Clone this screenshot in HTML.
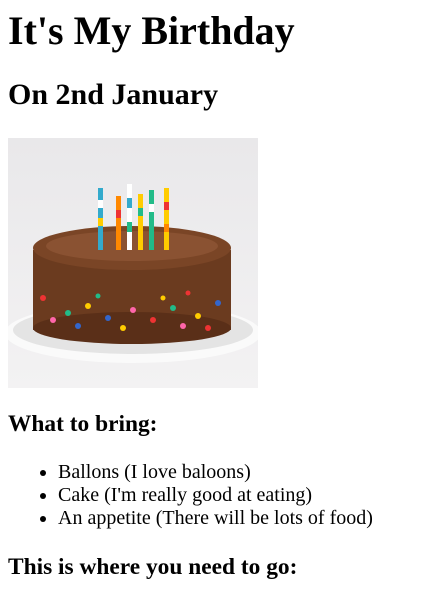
<!DOCTYPE html>
<html><head><meta charset="utf-8"><style>
html,body{margin:0;padding:0;background:#fff;}
body{padding:8px;font-family:"Liberation Serif",serif;color:#000;width:408px;height:575px;overflow:hidden}
h1{font-size:40px;margin:0 0 24px;line-height:46px;font-weight:bold}
h2{font-size:30px;margin:0 0 26px;line-height:34px;font-weight:bold}
h3{font-size:23.4px;margin:0;line-height:27px;font-weight:bold}
ul{margin:23px 0 24px;padding-left:50px;font-size:20px;line-height:23px}
.img{display:block;width:250px;height:250px;margin-bottom:23px}
</style></head><body>
<h1>It's My Birthday</h1>
<h2>On 2nd January</h2>
<svg class="img" viewBox="0 0 250 250">
<defs><linearGradient id="bg" x1="0" y1="0" x2="0" y2="1"><stop offset="0" stop-color="#e9e8ea"/><stop offset="1" stop-color="#f3f2f3"/></linearGradient></defs>
<rect width="250" height="250" fill="url(#bg)"/>
<ellipse cx="125" cy="195" rx="128" ry="30" fill="#fafafa"/>
<ellipse cx="125" cy="192" rx="120" ry="24" fill="#e4e4e4"/>
<rect x="25" y="112" width="198" height="80" fill="#6b3b1f"/>
<ellipse cx="124" cy="190" rx="99" ry="16" fill="#5a2f18"/>
<ellipse cx="124" cy="110" rx="99" ry="22" fill="#7a4526"/>
<ellipse cx="124" cy="108" rx="86" ry="15" fill="#8a5232"/>
<g fill="#e33">
<circle cx="35" cy="160" r="3"/><circle cx="60" cy="175" r="3" fill="#2b8"/><circle cx="80" cy="168" r="3" fill="#fc0"/><circle cx="100" cy="180" r="3" fill="#36c"/><circle cx="125" cy="172" r="3" fill="#f6a"/><circle cx="145" cy="182" r="3"/><circle cx="165" cy="170" r="3" fill="#2b8"/><circle cx="190" cy="178" r="3" fill="#fc0"/><circle cx="210" cy="165" r="3" fill="#36c"/><circle cx="45" cy="182" r="3" fill="#f6a"/><circle cx="70" cy="188" r="3" fill="#36c"/><circle cx="115" cy="190" r="3" fill="#fc0"/><circle cx="175" cy="188" r="3" fill="#f6a"/><circle cx="200" cy="190" r="3"/><circle cx="90" cy="158" r="2.5" fill="#2b8"/><circle cx="155" cy="160" r="2.5" fill="#fc0"/><circle cx="180" cy="155" r="2.5"/>
</g>
<g>
<rect x="90" y="50" width="5" height="62" fill="#3ac"/><rect x="90" y="62" width="5" height="8" fill="#fff"/><rect x="90" y="80" width="5" height="8" fill="#fc0"/>
<rect x="108" y="58" width="5" height="54" fill="#f80"/><rect x="108" y="72" width="5" height="8" fill="#e33"/>
<rect x="119" y="46" width="5" height="66" fill="#fff"/><rect x="119" y="60" width="5" height="10" fill="#3ac"/><rect x="119" y="84" width="5" height="10" fill="#2b8"/>
<rect x="130" y="56" width="5" height="56" fill="#fc0"/><rect x="130" y="70" width="5" height="8" fill="#2b8"/>
<rect x="141" y="52" width="5" height="60" fill="#2b8"/><rect x="141" y="66" width="5" height="8" fill="#fff"/>
<rect x="156" y="50" width="5" height="62" fill="#fc0"/><rect x="156" y="64" width="5" height="8" fill="#e33"/><rect x="156" y="86" width="5" height="8" fill="#f80"/>
</g>
</svg>
<h3>What to bring:</h3>
<ul>
<li>Ballons (I love baloons)</li>
<li>Cake (I'm really good at eating)</li>
<li>An appetite (There will be lots of food)</li>
</ul>
<h3>This is where you need to go:</h3>
</body></html>
